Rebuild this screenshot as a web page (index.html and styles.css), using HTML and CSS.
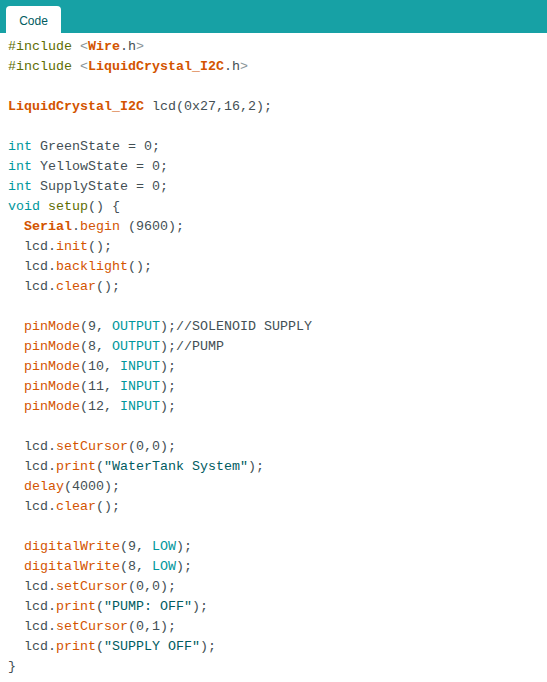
FILE: index.html
```html
<!DOCTYPE html>
<html>
<head>
<meta charset="utf-8">
<link rel="stylesheet" href="styles.css">
</head>
<body>
<div class="header"><div class="tab">Code</div></div>
<pre class="code"><span class="pp">#include</span> <span class="p">&lt;</span><span class="ob">Wire</span>.h<span class="p">&gt;</span>
<span class="pp">#include</span> <span class="p">&lt;</span><span class="ob">LiquidCrystal_I2C</span>.h<span class="p">&gt;</span>

<span class="ob">LiquidCrystal_I2C</span> lcd(0x27,16,2);

<span class="kw">int</span> GreenState = 0;
<span class="kw">int</span> YellowState = 0;
<span class="kw">int</span> SupplyState = 0;
<span class="kw">void</span> <span class="pp">setup</span>() {
  <span class="ob">Serial</span>.<span class="fn">begin</span> (9600);
  lcd.<span class="fn">init</span>();
  lcd.<span class="fn">backlight</span>();
  lcd.<span class="fn">clear</span>();

  <span class="fn">pinMode</span>(9, <span class="kw">OUTPUT</span>);<span class="cm">//SOLENOID SUPPLY</span>
  <span class="fn">pinMode</span>(8, <span class="kw">OUTPUT</span>);<span class="cm">//PUMP</span>
  <span class="fn">pinMode</span>(10, <span class="kw">INPUT</span>);
  <span class="fn">pinMode</span>(11, <span class="kw">INPUT</span>);
  <span class="fn">pinMode</span>(12, <span class="kw">INPUT</span>);

  lcd.<span class="fn">setCursor</span>(0,0);
  lcd.<span class="fn">print</span>(<span class="st">"WaterTank System"</span>);
  <span class="fn">delay</span>(4000);
  lcd.<span class="fn">clear</span>();

  <span class="fn">digitalWrite</span>(9, <span class="kw">LOW</span>);
  <span class="fn">digitalWrite</span>(8, <span class="kw">LOW</span>);
  lcd.<span class="fn">setCursor</span>(0,0);
  lcd.<span class="fn">print</span>(<span class="st">"PUMP: OFF"</span>);
  lcd.<span class="fn">setCursor</span>(0,1);
  lcd.<span class="fn">print</span>(<span class="st">"SUPPLY OFF"</span>);
}</pre>
</body>
</html>
```
FILE: styles.css
```css
html, body {
  margin: 0;
  padding: 0;
  background: #ffffff;
}
.header {
  height: 33px;
  background: #17a1a5;
  display: flex;
  align-items: flex-end;
  padding-left: 6px;
  box-sizing: border-box;
}
.tab {
  width: 55px;
  height: 27px;
  background: #ffffff;
  border-radius: 4px 4px 0 0;
  color: #005c5f;
  font-family: "Liberation Sans", Arial, sans-serif;
  font-size: 12px;
  display: flex;
  align-items: center;
  justify-content: center;
  padding-top: 2px;
  box-sizing: border-box;
}
.code {
  margin: 0;
  padding: 4px 8px 0 8px;
  font-family: "Liberation Mono", "Courier New", monospace;
  font-size: 13.33px;
  line-height: 20px;
  color: #434f54;
}
.pp { color: #5e6d03; }
.p { color: #8a9599; }
.ob { color: #d35400; font-weight: bold; }
.fn { color: #d35400; }
.kw { color: #00979c; }
.st { color: #005c5f; }
.cm { color: #434f54; }
```
